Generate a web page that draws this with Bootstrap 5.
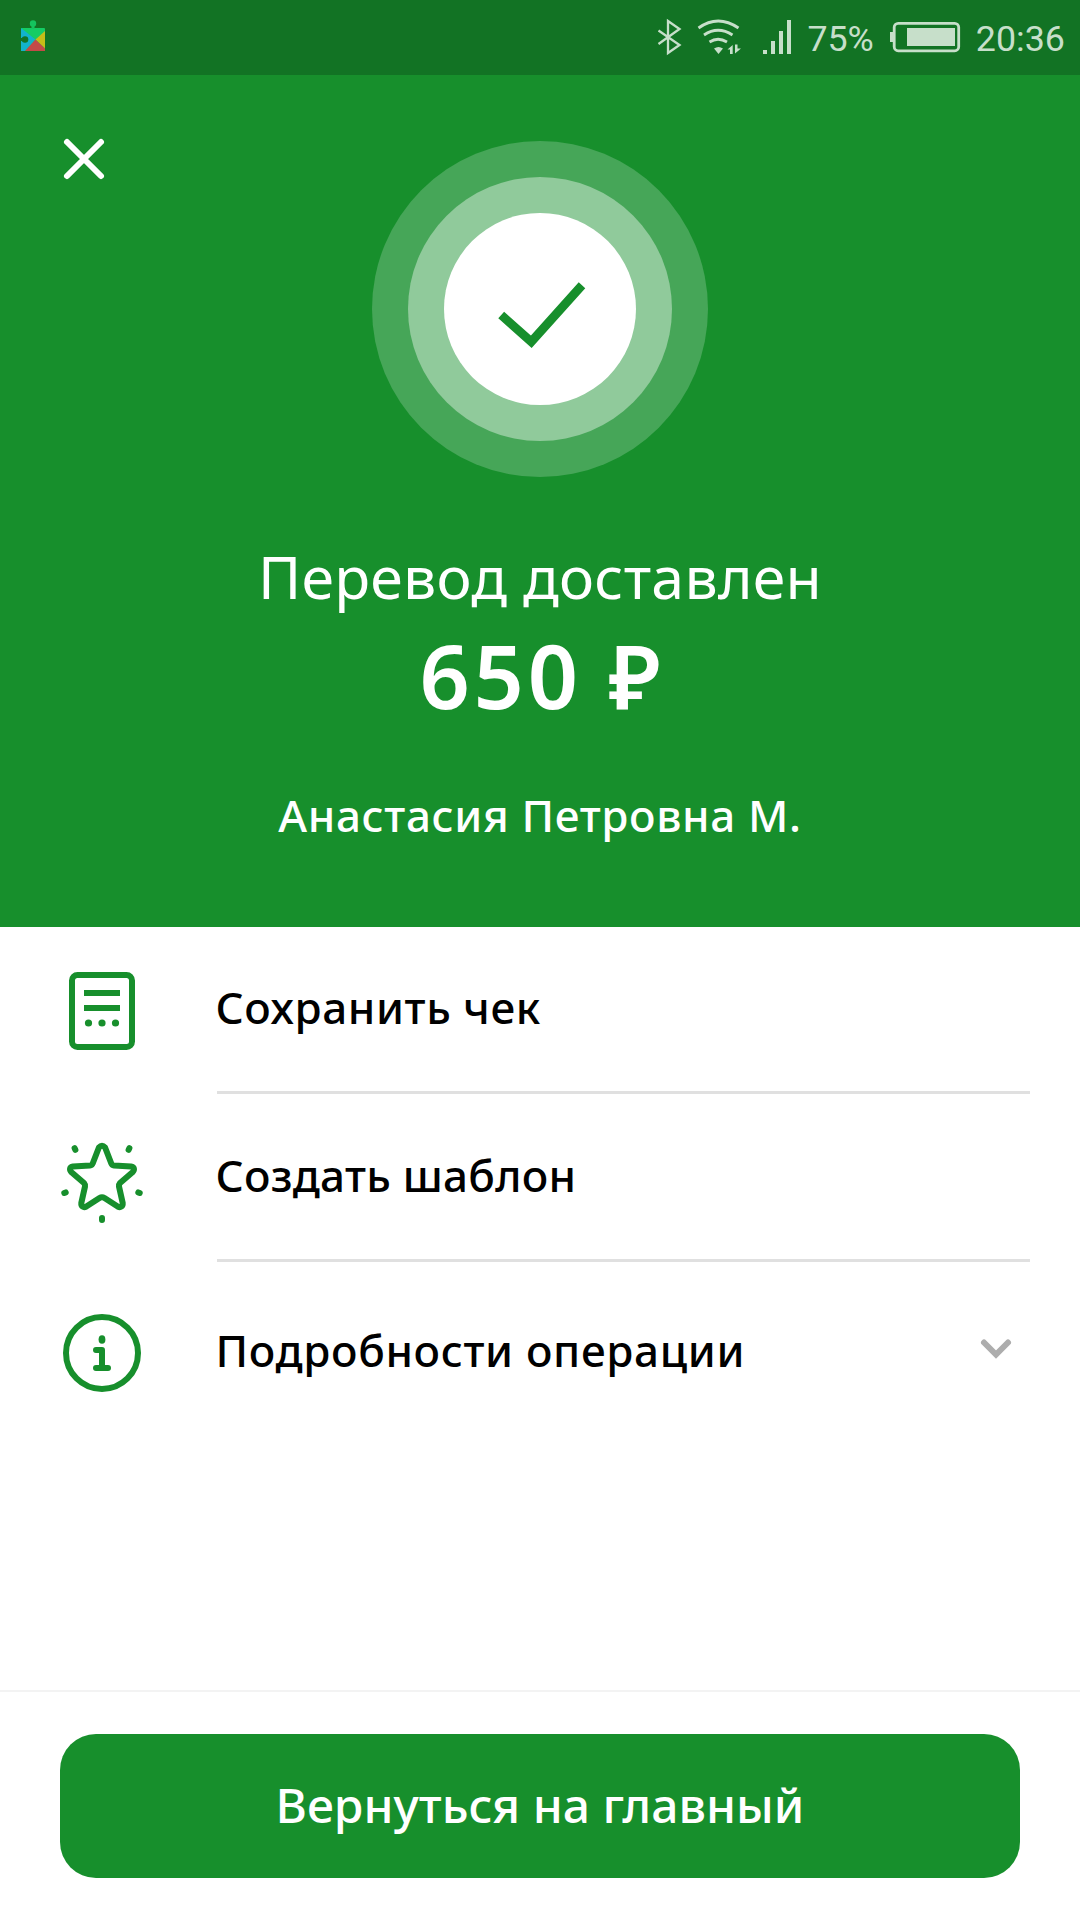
<!DOCTYPE html>
<html lang="ru">
<head>
<meta charset="utf-8">
<meta name="viewport" content="width=device-width, initial-scale=1">
<title>Перевод доставлен</title>
<link rel="stylesheet" href="https://cdn.jsdelivr.net/npm/bootstrap@5.3.0/dist/css/bootstrap.min.css">
<style>
  :root { --brand: #178f2c; --brand-dark: #127324; --status: #c7dfca; }
  body { font-family: "Noto Sans", sans-serif; color: #000; }
  svg { display: block; flex: none; }
  .screen { width: 1080px; min-height: 1920px; }
  .status-bar { height: 75px; background: var(--brand-dark); color: var(--status); font: 400 35.8px/79px Roboto, sans-serif; padding: 0 15px 0 20px; }
  .s-bat { margin: 0 14px; }
  .hero { height: 852px; background: var(--brand); padding-top: 66px; }
  .hero-top { display: grid; grid-template-columns: 1fr 336px 1fr; }
  .close-btn { margin: -6px 0 0 60px; }
  .txt { white-space: nowrap; }
  .t-title { font-size: 59px; line-height: 80px; margin-top: 59px; letter-spacing: .25px; }
  .t-amount { font-size: 88px; line-height: 100px; margin-top: 9px; font-weight: 600; letter-spacing: 3.8px; padding-left: 4px; }
  .t-name { font-size: 44px; line-height: 60px; margin-top: 60px; font-weight: 500; letter-spacing: .65px; }
  .action { padding-left: 60px; padding-right: 50px; }
  .action-icon { width: 157px; padding-top: 42px; }
  .action-body { height: 168px; border-bottom: 3px solid #e0e0e0; font-size: 44px; line-height: 60px; font-weight: 500; padding-top: 51px; }
  .action-body .txt { margin-left: -1.5px; letter-spacing: .25px; }
  .action:first-child .action-body { height: 167px; padding-top: 50px; }
  .action:first-child .txt { letter-spacing: .6px; }
  .action:last-child .txt { letter-spacing: .65px; }
  .action:last-child .action-icon { padding-top: 49px; }
  .action:last-child .action-body { border: 0; padding-top: 58px; }
  .footer-bar { border-top: 2px solid #f3f3f3; padding: 42px 60px; }
  .main-btn { height: 144px; border-radius: 36px; border: 0; background: var(--brand); color: #fff; font-size: 48px; font-weight: 500; padding: 0 0 3px; }
  .main-btn:hover { background: var(--brand-dark); color: #fff; }
</style>
</head>
<body class="bg-white">
<div class="screen d-flex flex-column">
  <div class="status-bar d-flex align-items-start">
    <svg width="26" height="75" viewBox="20 0 26 75">
      <rect x="21" y="28" width="24" height="23" rx="1" fill="#14cc64"/>
      <path d="M21 28L35.500 39.500 25 51H21Z" fill="#12b3cc"/>
      <path d="M45 31V48.500L35.500 39.500Z" fill="#c6bd18"/>
      <path d="M25 51L35.500 39.500 45 48.500V51Z" fill="#c44a48"/>
      <circle cx="33" cy="23.500" r="3.200" fill="#14c45e"/><rect x="31.500" y="25" width="3" height="4" fill="#14c45e"/>
      <circle cx="25" cy="39.500" r="3.300" fill="#127324"/><rect x="20.500" y="38" width="4" height="3" fill="#127324"/>
    </svg>
    <svg class="ms-auto" width="152" height="75" viewBox="656 0 152 75" fill="none" stroke="#c7dfca" stroke-width="2.300">
      <path d="M659.500 30.500L680.500 45 669 53V21L680.500 29 659.500 44"/>
      <g stroke-width="2.800"><path d="M699.500 28Q719 14 739.500 28"/><path d="M705 35Q719 25.500 733.500 35"/><path d="M710.500 42Q719 36.500 728 42"/></g>
      <g fill="#c7dfca" stroke="none">
        <path d="M715 48.500Q719.500 45.500 724 48.500L719.500 54Z"/>
        <path d="M728.500 49.500L733.700 45V54H731V49.500ZM736 44.500H738.500V48.500H742L736 53.500Z"/>
        <path d="M764 50h4v4h-4ZM772 41h4v13h-4ZM780 31h4v23h-4ZM788 20h4v34h-4Z"/>
      </g>
    </svg>
    <span class="txt">75%</span>
    <svg class="s-bat" width="74" height="75" viewBox="888 0 74 75">
      <rect x="894.200" y="23.300" width="64.500" height="27.500" rx="4" fill="none" stroke="#c7dfca" stroke-width="2.800"/>
      <path d="M890 32h4v10h-4ZM907 28h48v18h-48Z" fill="#c7dfca"/>
    </svg>
    <span class="txt">20:36</span>
  </div>

  <header class="hero text-white text-center">
    <div class="hero-top">
      <svg class="close-btn" width="48" height="48" viewBox="60 135 48 48" stroke="#fff" stroke-width="6" stroke-linecap="round"><path d="M67 142L101 176M101 142L67 176"/></svg>
      <svg width="336" height="336" viewBox="372 141 336 336">
        <circle cx="540" cy="309" r="168" fill="#46a658"/>
        <circle cx="540" cy="309" r="132" fill="#90ca9b"/>
        <circle cx="540" cy="309" r="96" fill="#fff"/>
        <path d="M501.200 315L531.300 341.700 582 285.200" fill="none" stroke="#178f2c" stroke-width="8.800"/>
      </svg>
    </div>
    <div class="t-title txt">Перевод доставлен</div>
    <div class="t-amount txt">650 ₽</div>
    <div class="t-name txt">Анастасия Петровна М.</div>
  </header>

  <main>
    <div class="action d-flex">
      <div class="action-icon"><svg width="84" height="84" viewBox="60 969 84 84">
        <rect x="72" y="975" width="60" height="72" rx="5.500" fill="none" stroke="#178f2c" stroke-width="6"/>
        <path d="M84 993H120M84 1008H120" stroke="#178f2c" stroke-width="6"/>
        <g fill="#178f2c"><circle cx="88.500" cy="1023" r="3.600"/><circle cx="102" cy="1023" r="3.600"/><circle cx="115.500" cy="1023" r="3.600"/></g>
      </svg></div>
      <div class="action-body flex-grow-1"><span class="txt">Сохранить чек</span></div>
    </div>
    <div class="action d-flex">
      <div class="action-icon"><svg width="84" height="88" viewBox="60 1136 84 88">
        <path d="M98.900 1147.500Q102 1144 105.100 1147.500L111.300 1163.500Q112 1165.300 114 1165.500L131 1166.500C134.500 1167 134.800 1170 132.500 1172.300L120 1183Q118.700 1184.500 119 1186.500L122.700 1203C123 1206.500 120.500 1208 117.700 1206.500L104.500 1198Q102 1196.500 99.500 1198L86.300 1206.500C83.500 1208 81 1206.500 81.300 1203L85 1186.500Q85.300 1184.500 84 1183L71.500 1172.300C69.200 1170 69.500 1167 73 1166.500L90 1165.500Q92 1165.300 92.700 1163.500Z" fill="none" stroke="#178f2c" stroke-width="6" stroke-linejoin="round"/>
        <path d="M74.600 1148.200L75.400 1149.800M129.400 1148.200L128.600 1149.800M64.300 1193L65.700 1192.400M139.700 1193L138.300 1192.400M102 1218V1220" stroke="#178f2c" stroke-width="6" stroke-linecap="round"/>
      </svg></div>
      <div class="action-body flex-grow-1"><span class="txt">Создать шаблон</span></div>
    </div>
    <div class="action d-flex">
      <div class="action-icon"><svg width="84" height="84" viewBox="60 1311 84 84" fill="none" stroke="#178f2c" stroke-width="6">
        <circle cx="102" cy="1353" r="36"/>
        <ellipse cx="102" cy="1339.500" rx="3.400" ry="4.300" fill="#178f2c" stroke="none"/>
        <path d="M96 1350H102V1368M96 1368H108" stroke-linecap="round" stroke-linejoin="round"/>
      </svg></div>
      <div class="action-body flex-grow-1 d-flex justify-content-between align-items-start"><span class="txt">Подробности операции</span>
        <svg class="me-3" width="36" height="60" viewBox="978 1320 36 60" fill="none" stroke="#adadad" stroke-width="6" stroke-linecap="round"><path d="M984 1342.500L996 1354.500 1008 1342.500"/></svg>
      </div>
    </div>
  </main>

  <footer class="footer-bar mt-auto">
    <button type="button" class="btn main-btn w-100"><span class="txt">Вернуться на главный</span></button>
  </footer>
</div>
<script src="https://cdn.jsdelivr.net/npm/bootstrap@5.3.0/dist/js/bootstrap.bundle.min.js"></script>
</body>
</html>
